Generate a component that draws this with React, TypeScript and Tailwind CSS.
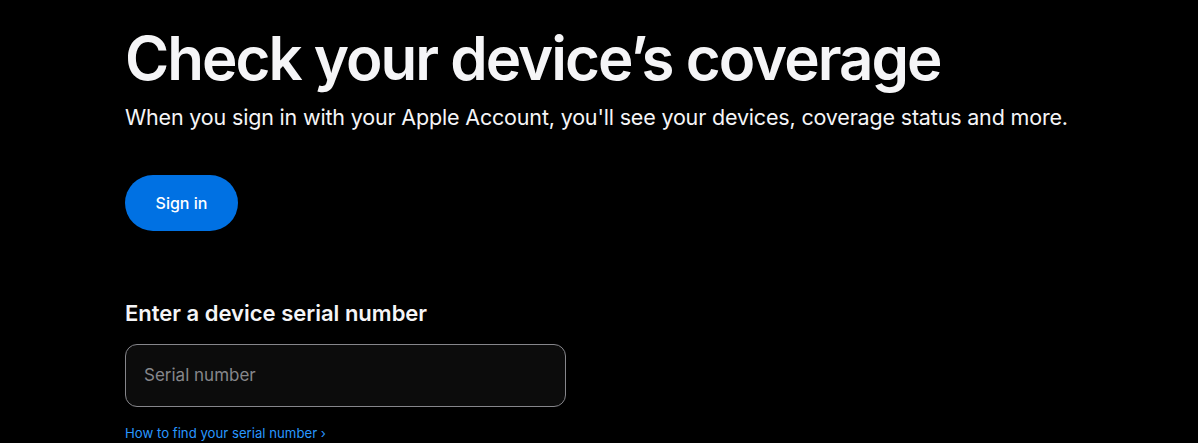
export default function App() {
  return (
    <div
      className="min-h-screen bg-black text-[#f5f5f7] overflow-hidden"
      style={{ fontFamily: 'Inter, "Noto Sans", Arial, sans-serif' }}
    >
      <div className="pl-[125px] pt-[22px]">
        <h1 className="text-[60px] leading-[72px] font-semibold tracking-[-0.033em]">
          Check your device’s coverage
        </h1>
        <p className="mt-[8px] text-[21.5px] leading-[30px] tracking-[-0.008em]">
          When you sign in with your Apple Account, you'll see your devices, coverage status and more.
        </p>

        <button className="mt-[43px] h-[56px] w-[113px] rounded-full bg-[#0071e3] text-[16px] font-medium text-white">
          Sign in
        </button>

        <h2 className="mt-[67px] text-[22px] leading-[30px] font-semibold">
          Enter a device serial number
        </h2>

        <div className="mt-[16px] w-[441px] h-[63px] rounded-[12px] border border-[#86868b] bg-[#0c0c0c] flex items-center px-[18px]">
          <input
            placeholder="Serial number"
            className="w-full bg-transparent outline-none text-[17px] text-[#f5f5f7] placeholder:text-[#86868b]"
          />
        </div>

        <a href="#" className="mt-[17px] inline-block text-[13.2px] leading-[18px] text-[#2997ff]">
          How to find your serial number ›
        </a>
      </div>
    </div>
  );
}
